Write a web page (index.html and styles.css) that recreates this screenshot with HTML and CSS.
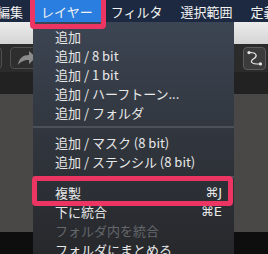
FILE: index.html
```html
<!DOCTYPE html>
<html lang="ja">
<head>
    <meta charset="UTF-8">
    <title>レイヤー メニュー</title>
    <link rel="stylesheet" href="styles.css">
</head>
<body>
    <div class="screen">
        <div class="menubar">
            <span class="menu-title">編集</span>
            <span class="menu-title active">レイヤー</span>
            <span class="menu-title">フィルタ</span>
            <span class="menu-title">選択範囲</span>
            <span class="menu-title">定義</span>
        </div>

        <div class="window">
            <div class="titlebar"></div>
            <div class="toolbar">
                <div class="tool-group">
                    <div class="tool-btn"></div>
                    <div class="tool-btn">
                        <svg class="redo" viewBox="0 0 20 16">
                            <path d="M1 15 C2 8 6 5 12 5 L12 1 L19 7.5 L12 14 L12 10 C7 10 3 12 1 15 Z"/>
                        </svg>
                    </div>
                </div>
                <div class="tool-btn small">
                    <svg class="curve" viewBox="0 0 23 23">
                        <path d="M5.5 5 C14 4.5 15 9 11 11.5 C6 14.5 7 17.5 17.5 17.5"/>
                        <circle cx="5.5" cy="5" r="1.8"/>
                        <circle cx="18" cy="17.5" r="1.8"/>
                    </svg>
                </div>
            </div>
            <div class="tabbar"></div>
            <div class="canvas"></div>
            <div class="statusbar"></div>
        </div>

        <!-- dropdown for レイヤー -->
        <div class="dropdown">
            <div class="item">追加</div>
            <div class="item">追加 / 8 bit</div>
            <div class="item">追加 / 1 bit</div>
            <div class="item">追加 / ハーフトーン...</div>
            <div class="item">追加 / フォルダ</div>
            <div class="sep"></div>
            <div class="item">追加 / マスク (8 bit)</div>
            <div class="item">追加 / ステンシル (8 bit)</div>
            <div class="sep"></div>
            <div class="item">複製<span class="key">⌘J</span></div>
            <div class="item">下に統合<span class="key">⌘E</span></div>
            <div class="item disabled">フォルダ内を統合</div>
            <div class="item">フォルダにまとめる</div>
        </div>

        <div class="callout callout-title"></div>
        <div class="callout callout-item"></div>
    </div>
</body>
</html>
```

FILE: styles.css
```css
* {
    box-sizing: border-box;
}

body {
    margin: 0;
    font-family: "Noto Sans CJK JP", "Noto Sans", sans-serif;
}

.screen {
    position: relative;
    width: 268px;
    height: 254px;
    overflow: hidden;
    background-color: #0e0e0e;
}

.menubar {
    display: flex;
    height: 22px;
    margin-left: -12px;
    background-color: #1d2940;
    white-space: nowrap;
}

.menu-title {
    padding: 1px 9px 0;
    color: #f2f2f2;
    font-size: 13px;
    line-height: 21px;
}

.menu-title.active {
    background-color: #2a7ee0;
}

.titlebar {
    height: 22px;
    background: linear-gradient(#ececec, #d4d4d4);
}

.toolbar {
    display: flex;
    justify-content: space-between;
    align-items: flex-start;
    height: 28px;
    padding: 3px 2px 0 0;
    background-color: #2b2b2b;
}

.tool-group {
    display: flex;
    gap: 8px;
    margin-left: -26px;
}

.tool-btn {
    display: flex;
    align-items: center;
    justify-content: center;
    width: 28px;
    height: 22px;
    border: 1px solid #4f4f4f;
    border-radius: 4px;
    background-color: #2e2e2e;
}

.tool-btn.small {
    width: 23px;
    height: 23px;
    border-color: #5c5c5c;
    background-color: #3b3b3b;
}

.redo {
    width: 20px;
    height: 16px;
    margin-left: 6px;
    fill: #8b8b8b;
}

.curve {
    width: 23px;
    height: 23px;
    fill: #e6e6e6;
}

.curve path {
    fill: none;
    stroke: #e6e6e6;
    stroke-width: 1.3;
}

.tabbar {
    height: 22px;
    background-color: #222223;
}

.canvas {
    height: 138px;
    background-color: #4a4846;
}

.statusbar {
    height: 22px;
    background-color: #0e0e0e;
}

.dropdown {
    position: absolute;
    left: 33px;
    top: 22px;
    width: 201px;
    height: 250px;
    padding-top: 4px;
    background: linear-gradient(#3c4553, #31363e 45%, #252629);
    color: #e8e8e8;
    font-size: 13px;
}

.item {
    display: flex;
    justify-content: space-between;
    align-items: center;
    height: 19px;
    padding: 1px 12px 0 22px;
    white-space: nowrap;
}

.item.disabled {
    color: #65676b;
}

.key {
    font-family: "DejaVu Sans", sans-serif;
    font-size: 13px;
}

.sep {
    height: 11.5px;
    padding-top: 5px;
}

.sep::after {
    content: "";
    display: block;
    height: 2px;
    background-color: #4c5159;
}

.callout {
    position: absolute;
    border: 5px solid #ec3563;
    border-radius: 4px;
}

.callout-title {
    left: 30px;
    top: -6px;
    width: 76px;
    height: 35px;
}

.callout-item {
    left: 32px;
    top: 176px;
    width: 201px;
    height: 30px;
}
```
